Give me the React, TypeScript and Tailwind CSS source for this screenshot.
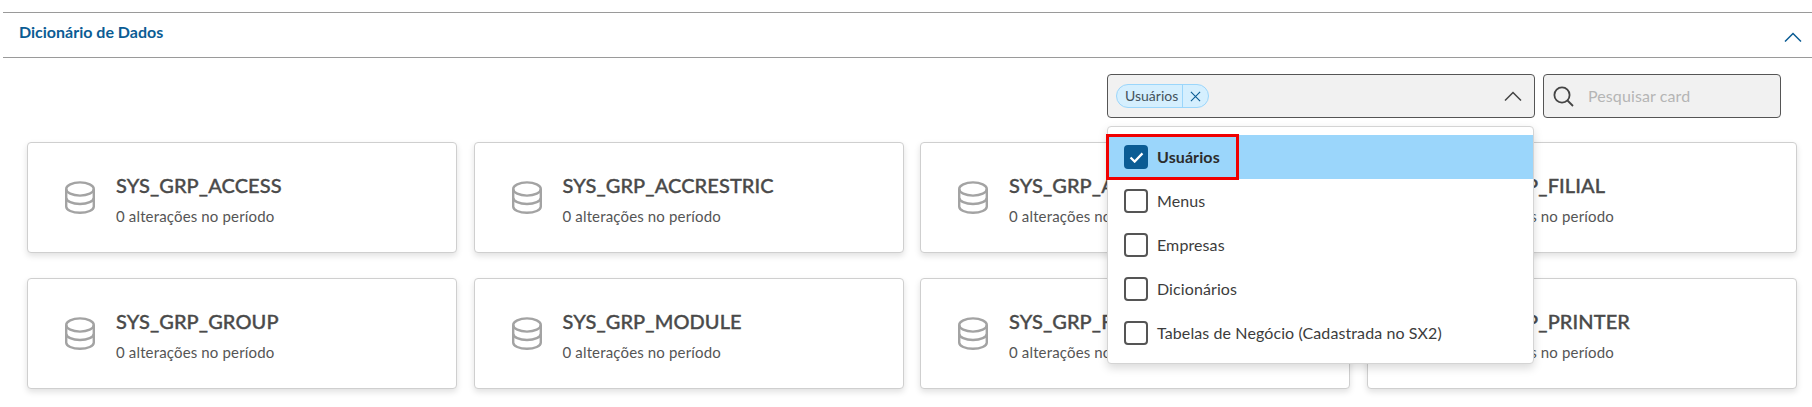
import React from 'react';

const font = "font-['Lato','Open_Sans',sans-serif]";

const cards = [
  'SYS_GRP_ACCESS',
  'SYS_GRP_ACCRESTRIC',
  'SYS_GRP_ACESSO',
  'SYS_GRP_FILIAL',
  'SYS_GRP_GROUP',
  'SYS_GRP_MODULE',
  'SYS_GRP_FEATURE',
  'SYS_GRP_PRINTER',
];

const options = ['Usuários', 'Menus', 'Empresas', 'Dicionários', 'Tabelas de Negócio (Cadastrada no SX2)'];

const Chevron = ({ className }: { className: string }) => (
  <svg viewBox="0 0 18 10" fill="none" stroke="currentColor" strokeWidth="1.5" className={className}>
    <path d="M1 9.5 9 1.5l8 8" />
  </svg>
);

const DatabaseIcon = () => (
  <svg viewBox="0 0 30 33" fill="none" stroke="#a3a3a3" strokeWidth="2.4" className="w-[30px] h-[33px] shrink-0">
    <ellipse cx="15" cy="8" rx="13.8" ry="6.6" />
    <path d="M1.2 8v17.5c0 3.6 6.2 6.3 13.8 6.3s13.8-2.7 13.8-6.3V8" />
    <path d="M1.2 16.7c0 3.6 6.2 6.3 13.8 6.3s13.8-2.7 13.8-6.3" />
  </svg>
);

const Card = ({ title }: { title: string }) => (
  <div className="h-[111px] flex items-center pl-[37px] gap-[21px] bg-white border border-[#cfcfcf] rounded-[4px] shadow-[0_3px_6px_rgba(0,0,0,0.12)]">
    <DatabaseIcon />
    <div className="flex flex-col gap-[8px] pt-[3px]">
      <div className="text-[20px] leading-[26px] font-medium text-[#4a4a4a] tracking-[0.1px] [-webkit-text-stroke:0.35px_#4a4a4a]">{title}</div>
      <div className="text-[15px] leading-[20px] text-[#555555] tracking-[0.15px]">0 alterações no período</div>
    </div>
  </div>
);

const Dropdown = () => (
  <div className="absolute left-[-1px] top-[51px] w-[427px] h-[238px] pt-[8px] bg-white border border-[#d4d4d4] rounded-[4px] shadow-[0_4px_10px_rgba(0,0,0,0.15)] z-10">
    {options.map((option, index) => (
      <div
        key={option}
        className={`h-[44px] flex items-center pl-[16px] gap-[9px] text-[16px] tracking-[0.1px] ${
          index === 0 ? 'bg-[#9bd6fb] font-bold text-[#2c2c2c]' : 'text-[#3c3c3c]'
        }`}
      >
        {index === 0 ? (
          <span className="w-[24px] h-[24px] rounded-[4px] bg-[#0b5c94] flex items-center justify-center">
            <svg viewBox="0 0 16 12" fill="none" stroke="white" strokeWidth="2.4" className="w-[15px] h-[11px]">
              <path d="M1.5 6 6 10.5 14.5 1.5" />
            </svg>
          </span>
        ) : (
          <span className="w-[24px] h-[24px] rounded-[4px] border-2 border-[#555555] bg-white" />
        )}
        <span>{option}</span>
      </div>
    ))}
    <div className="absolute left-[-2px] top-[7px] w-[133px] h-[46px] border-[3px] border-[#f00000]" />
  </div>
);

export default function App() {
  return (
    <div className={`w-[1812px] h-[407px] overflow-hidden bg-white ${font}`}>
      <div className="pt-[12px] pl-[3px]">
        <div className="h-[46px] flex items-center justify-between pl-[16px] pr-[10px] border-y border-[#9a9a9a]">
          <span className="text-[16px] font-bold text-[#0b5c94] pb-[7px]">Dicionário de Dados</span>
          <Chevron className="w-[18px] h-[10px] text-[#0b5c94] mt-[3px]" />
        </div>
      </div>

      <div className="flex justify-end gap-[8px] pr-[31px] mt-[16px]">
        <div className="relative w-[428px] h-[44px] flex items-center justify-between pl-[8px] pr-[12px] bg-[#f1f1f1] border border-[#555555] rounded-[4px]">
          <div className="flex items-center h-[24px] bg-[#d5effe] border border-[#9bd6fb] rounded-full text-[14px] text-[#44525c]">
            <span className="pl-[8px] pr-[4px] border-r border-[#9bd6fb] leading-[22px]">Usuários</span>
            <span className="px-[7px]">
              <svg viewBox="0 0 12 12" fill="none" stroke="#0b5c94" strokeWidth="1.2" className="w-[11px] h-[11px]">
                <path d="M1 1l10 10M11 1 1 11" />
              </svg>
            </span>
          </div>
          <Chevron className="w-[18px] h-[10px] text-[#444444]" />
          <Dropdown />
        </div>
        <div className="w-[238px] h-[44px] flex items-center pl-[9px] gap-[14px] bg-[#f1f1f1] border border-[#555555] rounded-[4px]">
          <svg viewBox="0 0 21 21" fill="none" stroke="#444444" strokeWidth="1.8" className="w-[21px] h-[21px]">
            <circle cx="9" cy="9" r="7.6" />
            <path d="m14.5 14.5 5.5 5.5" />
          </svg>
          <span className="text-[16px] text-[#b5b5b5] tracking-[0.1px]">Pesquisar card</span>
        </div>
      </div>

      <div className="grid grid-cols-4 gap-x-[16.5px] gap-y-[25px] pl-[27px] pr-[15.5px] mt-[24px]">
        {cards.map((card) => (
          <Card key={card} title={card} />
        ))}
      </div>
    </div>
  );
}
